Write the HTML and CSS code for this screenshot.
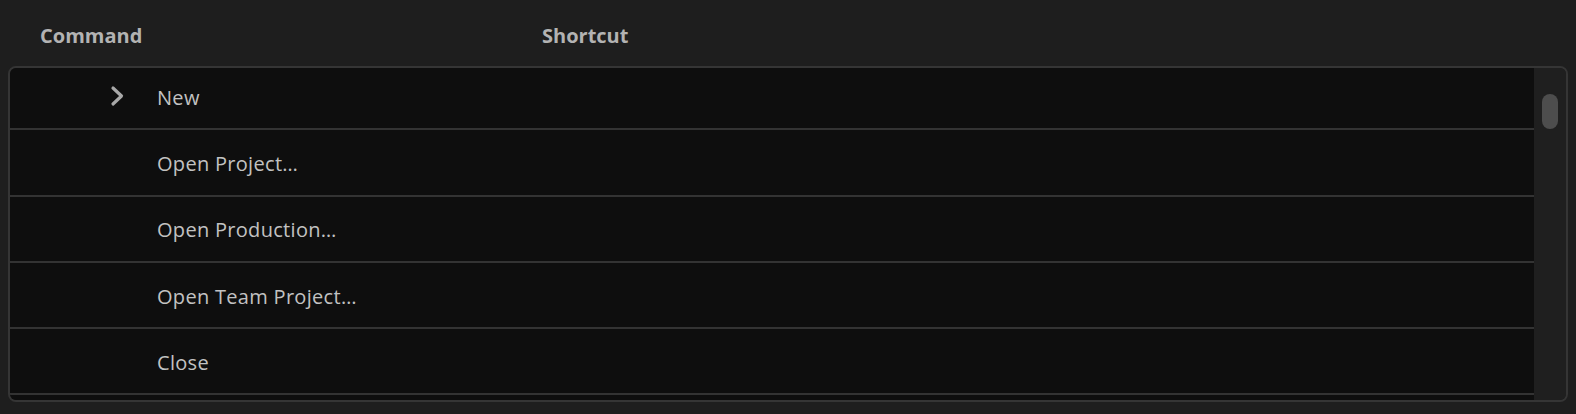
FILE: index.html
```html
<!DOCTYPE html>
<html>
<head>
<meta charset="utf-8">
<link rel="stylesheet" href="styles.css">
</head>
<body>
<div class="header">
  <div class="col-command">Command</div>
  <div class="col-shortcut">Shortcut</div>
</div>
<div class="panel">
  <div class="list">
    <div class="rows">
      <div class="row">
        <span class="twisty"><svg width="15" height="22" viewBox="0 0 15 22"><path d="M3 3 L11.5 11 L3 19" fill="none" stroke="#a8a8a8" stroke-width="3.2" stroke-linecap="round" stroke-linejoin="round"/></svg></span>
        <span class="label">New</span>
      </div>
      <div class="row"><span class="twisty"></span><span class="label">Open Project…</span></div>
      <div class="row"><span class="twisty"></span><span class="label">Open Production…</span></div>
      <div class="row"><span class="twisty"></span><span class="label">Open Team Project…</span></div>
      <div class="row"><span class="twisty"></span><span class="label">Close</span></div>
      <div class="row"><span class="twisty"></span><span class="label"></span></div>
    </div>
  </div>
  <div class="track"><div class="thumb"></div></div>
</div>
</body>
</html>
```
FILE: styles.css
```css
html, body {
  margin: 0;
  padding: 0;
  background: #1e1e1e;
  height: 100%;
  overflow: hidden;
}
body {
  font-family: "Open Sans", Lato, sans-serif;
}
.header {
  display: flex;
  height: 66px;
  box-sizing: border-box;
  padding: 23px 0 0 40px;
  font-size: 20px;
  font-weight: 700;
  color: #b3b3b3;
  line-height: 26px;
}
.col-command {
  width: 502px;
}
.panel {
  display: flex;
  margin: 0 8px;
  height: 336px;
  box-sizing: border-box;
  border: 2px solid #353535;
  border-radius: 8px;
  overflow: hidden;
}
.list {
  flex: 1;
  background: #0e0e0e;
  overflow: hidden;
}
.rows {
  margin-top: -4px;
}
.row {
  display: flex;
  align-items: center;
  height: 64.3px;
  border-bottom: 2px solid #333333;
  padding-left: 100px;
  font-size: 20px;
  letter-spacing: 0.3px;
  color: #c2c2c2;
}
.label {
  padding-top: 2px;
}
.twisty {
  width: 47px;
  display: flex;
  align-items: center;
}
.track {
  width: 32px;
  background: #1f1f1f;
  padding: 26px 0 0 8px;
  box-sizing: border-box;
}
.thumb {
  width: 16px;
  height: 35px;
  border-radius: 8px;
  background: #4d4d4d;
}
```
